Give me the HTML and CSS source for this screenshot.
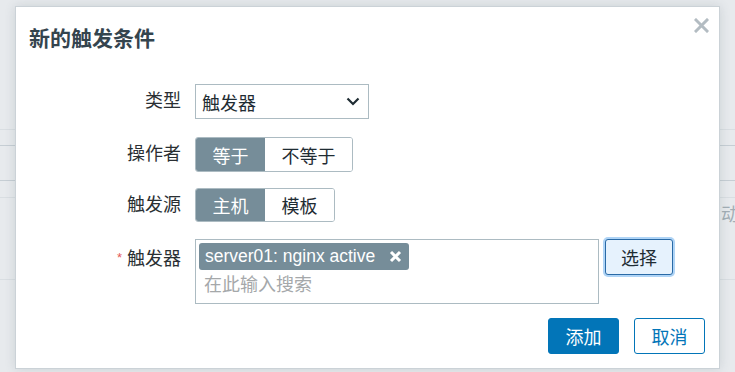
FILE: index.html
```html
<!DOCTYPE html>
<html lang="zh-CN">
<head>
<meta charset="utf-8">
<title>新的触发条件</title>
<link rel="stylesheet" href="styles.css">
</head>
<body>
<div class="page">
  <span class="bg-text">动</span>
  <div class="dialog">
    <div class="header">
      <h4 class="title">新的触发条件</h4>
      <button class="close" type="button" aria-label="关闭">
        <svg width="15" height="15" viewBox="0 0 15 15"><path d="M2 2 L13 13 M13 2 L2 13" stroke="#b3bcc2" stroke-width="3" stroke-linecap="square" fill="none"/></svg>
      </button>
    </div>
    <form class="form">
      <label class="label">类型</label>
      <div class="control">
        <div class="select">
          <span>触发器</span>
          <svg width="14" height="9" viewBox="0 0 14 9"><path d="M1.5 1.5 L7 7 L12.5 1.5" stroke="#1f2c33" stroke-width="2.2" fill="none"/></svg>
        </div>
      </div>

      <label class="label row-op">操作者</label>
      <div class="control row-op">
        <div class="segmented">
          <span class="seg on">等于</span><span class="seg">不等于</span>
        </div>
      </div>

      <label class="label">触发源</label>
      <div class="control">
        <div class="segmented short">
          <span class="seg on">主机</span><span class="seg">模板</span>
        </div>
      </div>

      <label class="label label-ms"><span class="req">*</span>触发器</label>
      <div class="control ms-row">
        <div class="multiselect">
          <span class="tag">server01: nginx active<svg class="tag-x" width="13" height="13" viewBox="0 0 13 13"><path d="M2 2 L11 11 M11 2 L2 11" stroke="#ffffff" stroke-width="3" fill="none"/></svg></span>
          <span class="placeholder">在此输入搜索</span>
        </div>
        <button class="btn-select" type="button">选择</button>
      </div>
    </form>
    <div class="footer">
      <button class="btn primary" type="button">添加</button>
      <button class="btn alt" type="button">取消</button>
    </div>
  </div>
</div>
</body>
</html>
```

FILE: styles.css
```css
html, body {
  margin: 0;
  padding: 0;
}

body {
  width: 735px;
  height: 372px;
  overflow: hidden;
  font-family: "Liberation Sans", "Noto Sans CJK SC", sans-serif;
  color: #1f2c33;
}

.page {
  position: relative;
  width: 735px;
  height: 372px;
  box-sizing: border-box;
  padding: 6px 0 0 15px;
  background-color: #e7eaed;
  background-image:
    linear-gradient(#d9dee2, #d9dee2),
    linear-gradient(#c6ced4, #c6ced4),
    linear-gradient(#c6ced4, #c6ced4),
    linear-gradient(#d9dee2, #d9dee2),
    linear-gradient(#d9dee2, #d9dee2);
  background-size: 100% 1px;
  background-repeat: no-repeat;
  background-position: 0 129px, 0 145px, 0 180px, 0 197px, 0 279px;
}

.bg-text {
  position: absolute;
  left: 721px;
  top: 204px;
  font-size: 18px;
  line-height: 22px;
  color: #a2aeb5;
  z-index: 0;
}

.dialog {
  position: relative;
  z-index: 1;
  width: 705px;
  height: 363px;
  box-sizing: border-box;
  background: #ffffff;
  border: 1px solid #cbd2d7;
  box-shadow: 0 0 10px rgba(60, 80, 95, 0.16);
  display: flex;
  flex-direction: column;
}

.header {
  display: flex;
  justify-content: space-between;
  align-items: flex-start;
  padding: 11px 10px 0 13px;
}

.title {
  margin: 9px 0 0 0;
  font-size: 21px;
  line-height: 24px;
  font-weight: bold;
  color: #34444e;
}

.close {
  border: 0;
  background: none;
  padding: 0;
  width: 15px;
  height: 15px;
  display: block;
}

.close svg {
  display: block;
}

.form {
  display: grid;
  grid-template-columns: 165px 1fr;
  column-gap: 14px;
  row-gap: 16px;
  margin-top: 33px;
  font-size: 18px;
}

.label {
  text-align: right;
  line-height: 35px;
  height: 35px;
  color: #2a2f33;
  white-space: nowrap;
}

.row-op {
  margin-top: 2px;
}

.label-ms {
  line-height: 35px;
  padding-top: 1px;
}

.req {
  color: #e45959;
  font-size: 13px;
  vertical-align: 3px;
  margin-right: 5px;
}

.control {
  display: flex;
  align-items: flex-start;
}

.select {
  width: 174px;
  height: 35px;
  box-sizing: border-box;
  border: 1px solid #acbbc2;
  display: flex;
  align-items: center;
  justify-content: space-between;
  padding: 0 8px 0 6px;
  color: #1f2c33;
}

.select svg {
  display: block;
}

.segmented {
  display: flex;
  height: 35px;
  box-sizing: border-box;
  border: 1px solid #acbbc2;
  border-radius: 3px;
  overflow: hidden;
}

.segmented.short {
  height: 34px;
}

.seg {
  display: flex;
  align-items: center;
  padding: 0 16.5px;
  color: #1f2c33;
  background: #ffffff;
}

.seg.on {
  background: #768d99;
  color: #ffffff;
  margin: -1px 0 -1px -1px;
  padding-left: 17.5px;
}

.ms-row {
  gap: 6px;
}

.multiselect {
  width: 404px;
  height: 65px;
  box-sizing: border-box;
  border: 1px solid #acbbc2;
  padding: 3px 3px 0 3px;
  display: flex;
  flex-direction: column;
  align-items: flex-start;
}

.tag {
  display: flex;
  align-items: center;
  height: 27px;
  box-sizing: border-box;
  background: #768d99;
  color: #ffffff;
  border-radius: 3px;
  padding: 0 7px 0 6px;
  line-height: 27px;
  font-size: 17.5px;
  white-space: nowrap;
}

.tag-x {
  display: block;
  margin-left: 14px;
}

.placeholder {
  color: #a5a8aa;
  line-height: 30px;
  padding-left: 5px;
}

.btn-select {
  width: 68px;
  height: 36px;
  box-sizing: border-box;
  border: 1px solid #2a6aa6;
  border-radius: 3px;
  background: #e6f2fd;
  color: #1f2c33;
  font-family: inherit;
  font-size: 18px;
  padding: 0;
  box-shadow: 0 0 0 2px #afd4f6;
}

.footer {
  margin-top: auto;
  display: flex;
  justify-content: flex-end;
  gap: 15px;
  padding: 0 14px 14px 0;
}

.btn {
  width: 71px;
  height: 36px;
  box-sizing: border-box;
  border-radius: 3px;
  font-family: inherit;
  font-size: 18px;
  padding: 0;
  border: 1px solid #0275b8;
}

.btn.primary {
  background: #0275b8;
  color: #ffffff;
}

.btn.alt {
  background: #ffffff;
  color: #0275b8;
}
```
